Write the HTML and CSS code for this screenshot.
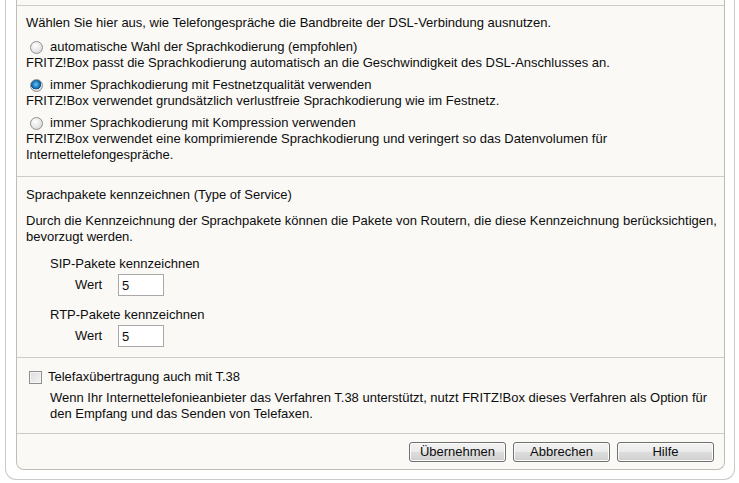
FILE: index.html
```html
<!DOCTYPE html>
<html lang="de">
<head>
<meta charset="utf-8">
<title>Internettelefonie</title>
<link rel="stylesheet" href="styles.css">
</head>
<body>
<div class="outer">
  <div class="inner">
    <div class="sec sec0"></div>
    <div class="sec sec1">
      <p class="intro">Wählen Sie hier aus, wie Telefongespräche die Bandbreite der DSL-Verbindung ausnutzen.</p>
      <div class="opt">
        <label class="optrow"><input type="radio" name="codec" class="radio"><span>automatische Wahl der Sprachkodierung (empfohlen)</span></label>
        <p class="desc">FRITZ!Box passt die Sprachkodierung automatisch an die Geschwindigkeit des DSL-Anschlusses an.</p>
      </div>
      <div class="opt">
        <label class="optrow"><input type="radio" name="codec" class="radio" checked><span>immer Sprachkodierung mit Festnetzqualität verwenden</span></label>
        <p class="desc">FRITZ!Box verwendet grundsätzlich verlustfreie Sprachkodierung wie im Festnetz.</p>
      </div>
      <div class="opt">
        <label class="optrow"><input type="radio" name="codec" class="radio"><span>immer Sprachkodierung mit Kompression verwenden</span></label>
        <p class="desc">FRITZ!Box verwendet eine komprimierende Sprachkodierung und veringert so das Datenvolumen für Internettelefongespräche.</p>
      </div>
    </div>
    <div class="sec sec2">
      <p class="title">Sprachpakete kennzeichnen (Type of Service)</p>
      <p class="para">Durch die Kennzeichnung der Sprachpakete können die Pakete von Routern, die diese Kennzeichnung berücksichtigen, bevorzugt werden.</p>
      <p class="sub">SIP-Pakete kennzeichnen</p>
      <div class="valrow"><span class="vallabel">Wert</span><input class="val" type="text" value="5"></div>
      <p class="sub sub2">RTP-Pakete kennzeichnen</p>
      <div class="valrow valrow2"><span class="vallabel">Wert</span><input class="val" type="text" value="5"></div>
    </div>
    <div class="sec sec3">
      <label class="chkrow"><input type="checkbox" class="chk"><span>Telefaxübertragung auch mit T.38</span></label>
      <p class="faxdesc">Wenn Ihr Internettelefonieanbieter das Verfahren T.38 unterstützt, nutzt FRITZ!Box dieses Verfahren als Option für den Empfang und das Senden von Telefaxen.</p>
    </div>
    <div class="sec sec4">
      <button class="btn" type="button">Übernehmen</button>
      <button class="btn" type="button">Abbrechen</button>
      <button class="btn" type="button">Hilfe</button>
    </div>
  </div>
</div>
</body>
</html>
```
FILE: styles.css
```css
html, body {
  margin: 0;
  padding: 0;
  background: #ffffff;
}
body {
  font-family: "Liberation Sans", Arial, sans-serif;
  font-size: 13px;
  line-height: 16px;
  color: #0d0d0d;
}
p { margin: 0; }

.outer {
  box-sizing: border-box;
  width: 730px;
  margin-left: 5px;
  border: 1px solid #cacac6;
  border-top: none;
  border-radius: 0 0 11px 11px;
  padding: 0 9px 9px 10px;
}
.inner {
  background: #faf9f6;
  border: 1px solid #bdbdb6;
  border-top: none;
  border-radius: 0 0 8px 8px;
}
.sec {
  border-bottom: 1px solid #cdcdc7;
  padding-left: 9px;
  padding-right: 3px;
}
.sec0 { height: 5px; }

.sec1 { padding-top: 9px; padding-bottom: 13px; }
.intro { margin-bottom: 8px; }
.opt + .opt { margin-top: 6px; }
.optrow {
  display: flex;
  align-items: center;
  height: 16px;
}
.radio {
  appearance: none;
  -webkit-appearance: none;
  box-sizing: border-box;
  width: 13px;
  height: 13px;
  margin: 0 7px 0 4px;
  border-radius: 50%;
  border: 1px solid #8f8f8f;
  background: radial-gradient(circle at 40% 35%, #ffffff 0%, #e6e6e6 55%, #cfcfcf 100%);
  flex: none;
}
.radio:checked {
  background:
    radial-gradient(circle at 45% 40%, #6fc3f0 0%, #1f7fc4 35%, #0b4f86 55%, rgba(0,0,0,0) 58%),
    radial-gradient(circle at 40% 35%, #ffffff 0%, #e6e6e6 55%, #cfcfcf 100%);
}

.sec2 { padding-top: 10px; padding-bottom: 10px; }
.para { margin-top: 10px; }
.sub { margin-top: 11px; padding-left: 24px; }
.sub2 { margin-top: 11px; }
.valrow {
  display: flex;
  align-items: center;
  margin-top: 2px;
  padding-left: 49px;
  height: 22px;
}
.valrow2 { margin-top: 2px; }
.vallabel { width: 43px; }
.val {
  box-sizing: border-box;
  width: 46px;
  height: 22px;
  margin: 0;
  padding: 0 0 0 3px;
  border: 1px solid #a8a8a8;
  background: #ffffff;
  font-family: "Liberation Sans", Arial, sans-serif;
  font-size: 13px;
  color: #0d0d0d;
}

.sec3 { padding-top: 11px; padding-bottom: 11px; }
.chkrow {
  display: flex;
  align-items: center;
  height: 16px;
}
.chk {
  appearance: none;
  -webkit-appearance: none;
  box-sizing: border-box;
  width: 13px;
  height: 13px;
  margin: 0 6px 0 3px;
  border: 1px solid #8e8f8f;
  background: linear-gradient(135deg, #dcdcdc 0%, #f4f4f4 100%);
  box-shadow: inset 0 0 0 1px #f4f4f4;
  flex: none;
}
.faxdesc { margin-top: 5px; padding-left: 24px; padding-right: 7px; }

.sec4 {
  border-bottom: none;
  padding-top: 8px;
  padding-bottom: 7px;
  padding-right: 10px;
  display: flex;
  justify-content: flex-end;
  gap: 7px;
}
.btn {
  box-sizing: border-box;
  width: 97px;
  height: 20px;
  margin: 0;
  padding: 0;
  border: 1px solid #707070;
  border-radius: 3px;
  background: linear-gradient(to bottom, #f2f2f2 0%, #ebebeb 48%, #dddddd 52%, #cfcfcf 100%);
  box-shadow: inset 0 0 0 1px #fcfcfc;
  font-family: "Liberation Sans", Arial, sans-serif;
  font-size: 13px;
  line-height: 16px;
  color: #0d0d0d;
}
```
